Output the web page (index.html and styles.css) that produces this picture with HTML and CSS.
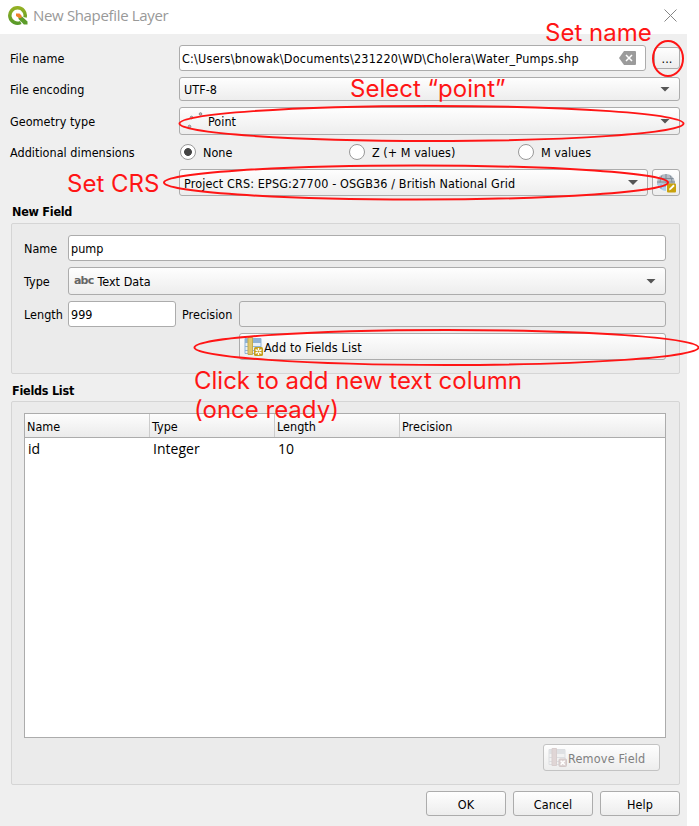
FILE: index.html
```
<!DOCTYPE html>
<html lang="en">
<head>
<meta charset="utf-8">
<title>New Shapefile Layer</title>
<link rel="stylesheet" href="styles.css">
</head>
<body>
<main class="dialog">
  <header class="titlebar">
    <svg class="logo" width="20" height="20" viewBox="0 0 20 20"><defs><linearGradient id="g" x2="0" y2="1"><stop stop-color="#93b023"/><stop offset="1" stop-color="#599a29"/></linearGradient></defs><path d="M12.8 16.5A7.7 7.7 0 1 1 17 11.400" fill="none" stroke="url(#g)" stroke-width="3.500"/><path d="M10.500 10.500h3.500l5.500 5v3h-3.600L10.500 13z" fill="#5c9c2a"/><path d="M8 7.500h3.500l2 2v2.500h-2.500L8 10z" fill="#ef7f2d"/></svg>
    <h1>New Shapefile Layer</h1>
    <svg class="close" width="13" height="13" viewBox="0 0 13 13"><path d="M.5.5l12 12M12.5.5l-12 12" stroke="#858585" fill="none"/></svg>
  </header>

  <section class="form">
    <label>File name</label>
    <div class="row file-row">
      <div class="input grow"><span class="t-path">C:\Users\bnowak\Documents\231220\WD\Cholera\Water_Pumps.shp</span>
        <svg width="17" height="14" viewBox="0 0 17 14"><path d="M5 0h11q1 0 1 1v12q0 1-1 1H5L0 7z" fill="#9b9b9b"/><path d="M7 4l6 6M13 4l-6 6" stroke="#fff" stroke-width="1.5"/></svg></div>
      <button class="btn dots"><span>...</span></button>
    </div>
    <label>File encoding</label>
    <div class="combo enc"><span>UTF-8</span><i class="arrow"></i></div>
    <label>Geometry type</label>
    <div class="combo geom"><svg width="18" height="18" viewBox="0 0 18 18" fill="#bbb" stroke="#8b8b8b"><circle cx="4.500" cy="14.500" r="1.300"/><circle cx="6.500" cy="5.500" r="1.300"/><circle cx="15.500" cy="2" r="1.300"/></svg><span>Point</span><i class="arrow"></i></div>
    <label>Additional dimensions</label>
    <div class="radios">
      <div><i class="radio on"></i><span>None</span></div>
      <div><i class="radio"></i><span>Z (+ M values)</span></div>
      <div><i class="radio"></i><span>M values</span></div>
    </div>
    <div class="row crs-row">
      <div class="combo crs grow"><span class="t-crs">Project CRS: EPSG:27700 - OSGB36 / British National Grid</span><i class="arrow"></i></div>
      <button class="btn globe"><svg width="20" height="20" viewBox="0 0 20 20"><path d="M1 9Q2 1 10 1q7 0 9 8v3H1z" fill="#b4bdc6"/><path d="M2.500 5.500h15M1 9h18M6 2.500q-2 3-2 7M10 1v9M14 2.500q2 3 2 7" fill="none" stroke="#7f8b96" stroke-width=".9"/><path d="M1 11q5-2 9 1v6q-6 0-9-7z" fill="#a9cfee"/><path d="M2 13.500h8M5 11v5" stroke="#7ea6c9" stroke-width=".8"/><rect x="11" y="10.500" width="9" height="9" rx="1" fill="#c9a20c"/><path d="M13 17.500l.7-2.200 3.700-3.700 1.300 1.300-3.700 3.700z" fill="#fff"/></svg></button>
    </div>
  </section>

  <h2 class="h-new">New Field</h2>
  <section class="group newfield">
    <label>Name</label><div class="input name"><span>pump</span></div>
    <label>Type</label><div class="combo type"><b>abc</b><span>Text Data</span><i class="arrow"></i></div>
    <label>Length</label>
    <div class="row len-row"><div class="input length"><span>999</span></div><label class="t-prec">Precision</label><div class="input disabled grow"></div></div>
    <button class="btn add"><svg width="19" height="19" viewBox="0 0 19 19"><path d="M1 1.500h16v15H1z" fill="#e8f0f8" stroke="#8eb3d8"/><path d="M1 2h16v4H1z" fill="#8fb2d5"/><path d="M1 9.500h16M1 13.500h16" stroke="#8eb3d8"/><path d="M4 .5h4.500v17H4z" fill="#dfc66e" stroke="#c5ab4a"/><rect x="10" y="10" width="9" height="9" rx="1.500" fill="#c6a01c"/><path d="M14.500 11v7M11.500 12.700l6 3.600M17.500 12.700l-6 3.600" stroke="#fff" stroke-width="1.400"/><circle cx="14.500" cy="14.500" r="1" fill="#c6a01c"/></svg><span>Add to Fields List</span></button>
  </section>

  <h2 class="h-list">Fields List</h2>
  <section class="group list">
    <div class="table">
      <div class="thead"><span>Name</span><span>Type</span><span>Length</span><span>Precision</span></div>
      <div class="tr"><span>id</span><span>Integer</span><span>10</span><span></span></div>
    </div>
    <button class="btn remove"><svg width="19" height="19" viewBox="0 0 19 19"><path d="M1 1.500h16v15H1z" fill="#f2f2f2" stroke="#dcdee1"/><path d="M1 2h16v4H1z" fill="#dfe1e4"/><path d="M1 9.500h16M1 13.500h16" stroke="#dcdee1"/><path d="M4 .5h4.500v17H4z" fill="#e0d6d6" stroke="#d8cece"/><rect x="11" y="11" width="7.500" height="7.500" rx="1" fill="#ddd3d3" stroke="#d3c8c8"/><path d="M12.700 12.700l4 4M16.700 12.700l-4 4" stroke="#fff" stroke-width="1.500"/></svg><span>Remove Field</span></button>
  </section>

  <footer><button class="btn"><span>OK</span></button><button class="btn"><span>Cancel</span></button><button class="btn"><span>Help</span></button></footer>
</main>

<svg class="rings" width="699" height="826" viewBox="0 0 699 826" fill="none" stroke="#ff1515" stroke-width="2">
  <ellipse cx="668" cy="58.500" rx="15" ry="17.500"/>
  <ellipse cx="431.500" cy="123.500" rx="252" ry="17.500"/>
  <ellipse cx="416" cy="182.500" rx="252" ry="17"/>
  <ellipse cx="446.500" cy="347.500" rx="252" ry="17.500"/>
</svg>
<p class="note n-name">Set name</p>
<p class="note n-point">Select “point”</p>
<p class="note n-crs">Set CRS</p>
<p class="note n-add">Click to add new text column<br>(once ready)</p>
</body>
</html>
```
FILE: styles.css
```
* { box-sizing: border-box; }
body { margin: 0; width: 699px; height: 826px; overflow: hidden; background: #fff; color: #000; font: 12.5px/16px "DejaVu Sans Condensed", "DejaVu Sans", sans-serif; font-stretch: condensed; letter-spacing: .03px; position: relative; }
h1, h2, p { margin: 0; }
span, label { white-space: nowrap; }
label, .input span, .combo span, .btn span, .radios span { padding-top: 2px; }
.dialog { width: 687px; height: 826px; background: #efefef; }
.titlebar { width: 699px; height: 34px; background: #fff; display: flex; align-items: center; padding: 0 22px 3px 8px; }
.titlebar h1 { font: 15px/20px "Open Sans", sans-serif; color: #999; margin: -2px 0 0 5px; flex: 1; letter-spacing: -.34px; }
.row, .input, .combo, .btn, .radios, .radios div { display: flex; align-items: center; }
.grow { flex: 1; }
.form { display: grid; grid-template-columns: 169px 501px; grid-template-rows: 26px 24px 28px 22px 27px; row-gap: 6px; padding: 11px 7px 0 10px; align-items: center; }
.file-row { gap: 8px; }
.t-path { letter-spacing: .22px; margin-left: -1px; }
.t-crs { letter-spacing: .13px; }
.crs-row { grid-column: 2; gap: 4px; }
.input, .combo, .btn { border: 1px solid #acacac; border-radius: 3px; }
.input { height: 26px; background: #fff; padding: 0 9px 0 3px; justify-content: space-between; }
.input.disabled { background: #efefef; }
.combo, .btn { background: linear-gradient(#fefefe, #ededed); }
.combo { padding: 0 9px 0 4px; }
.enc { height: 24px; }
.geom, .type { height: 28px; }
.geom svg { margin: 0 5px 0 1px; }
.crs { height: 27px; }
.arrow { width: 10px; height: 5px; margin-left: auto; background: #555; clip-path: polygon(0 0, 100% 0, 50% 100%); }
.btn { font: inherit; letter-spacing: inherit; color: #000; padding: 0; justify-content: center; }
.dots { width: 26px; height: 22px; margin-top: -1px; }
.globe { width: 28px; height: 27px; }
.radios div { flex: none; width: 169px; }
.radio { width: 16px; height: 16px; border: 1px solid #999; border-radius: 50%; background: #fff; margin: 0 7px 0 1px; }
.radio.on { background: radial-gradient(circle, #444 0 3.500px, #fff 4.300px); }
h2 { font-size: 12.500px; line-height: 16px; font-weight: bold; margin-left: 12px; letter-spacing: -.25px; }
.h-new { margin-top: 8px; }
.h-list { margin-top: 9px; }
.group { width: 669px; margin-left: 11px; border: 1px solid #d5d5d5; border-radius: 2px; background: #ebebeb; }
.newfield { height: 151px; margin-top: 3px; padding: 11px 13px 0 12px; display: grid; grid-template-columns: 44px 598px; grid-template-rows: 26px 28px 26px 27px; row-gap: 6px; align-items: center; }
.newfield .input span { margin-left: -1px; }
.type { padding-left: 5px; }
.type b { color: #666; font: bold 11px/14px "DejaVu Sans", sans-serif; margin: -1px 4px 0 0; letter-spacing: -.8px; }
.length { width: 108px; }
.t-prec { width: 57px; margin-left: 6px; }
.add { grid-column: 2; height: 27px; margin-left: 171px; justify-content: flex-start; padding-left: 4px; }
.add span { margin-left: 1px; letter-spacing: .15px; }
.list { height: 384px; margin-top: 2px; padding: 11px 13px 0 12px; }
.table { height: 325px; background: #fff; border: 1px solid #acacac; }
.thead, .tr { display: grid; grid-template-columns: 125px 125px 125px 1fr; }
.thead { height: 24px; border-bottom: 1px solid #acacac; background: linear-gradient(#fdfdfd, #ebebeb); }
.thead span { padding: 5px 0 0 2px; border-right: 1px solid #ccc; }
.thead span:last-child { border: 0; }
.tr { font: 14px/22px "Open Sans", sans-serif; }
.tr span { padding-left: 3px; }
.remove { width: 117px; height: 27px; margin: 6px 6px 0 auto; color: #808080; border-color: #c3c3c3; justify-content: flex-start; padding-left: 4px; }
.remove span { margin-left: 1px; letter-spacing: .2px; }
footer { display: flex; justify-content: flex-end; gap: 7px; padding: 6px 7px 0 0; }
footer .btn { width: 80px; height: 25px; }
.rings { position: absolute; left: 0; top: 0; }
.note { position: absolute; color: #ff1515; font: 24px/29px Inter, sans-serif; letter-spacing: 0; white-space: nowrap; }
.n-name { left: 545px; top: 18px; }
.n-point { left: 350px; top: 74px; }
.n-crs { left: 67px; top: 169px; }
.n-add { left: 194px; top: 366px; }
```
